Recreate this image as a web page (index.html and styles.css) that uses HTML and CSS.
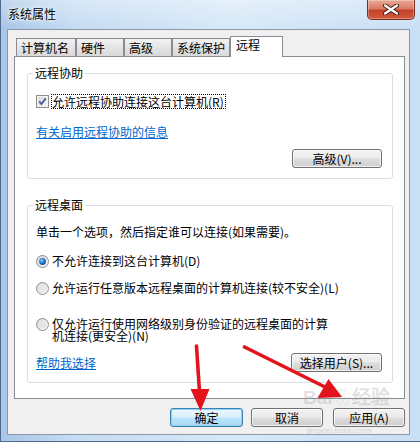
FILE: index.html
```html
<!DOCTYPE html>
<html lang="zh-CN">
<head>
    <meta charset="UTF-8">
    <title>系统属性</title>
    <link rel="stylesheet" href="styles.css">
</head>
<body>
    <div class="window">
        <div class="titlebar">
            <span class="title">系统属性</span>
            <span class="close-btn">
                <svg width="16" height="11" viewBox="0 0 16 11">
                    <path d="M2 1.5 L14 9.5 M14 1.5 L2 9.5" stroke="#4a2018" stroke-width="4.2" stroke-linecap="round"/>
                    <path d="M2 1.5 L14 9.5 M14 1.5 L2 9.5" stroke="#fff" stroke-width="2.2" stroke-linecap="round"/>
                </svg>
            </span>
        </div>

        <div class="client">
            <div class="tabs">
                <span class="tab tab-name">计算机名</span>
                <span class="tab tab-hw">硬件</span>
                <span class="tab tab-adv">高级</span>
                <span class="tab tab-prot">系统保护</span>
                <span class="tab tab-remote active">远程</span>
            </div>

            <div class="panel">
                <fieldset class="group">
                    <legend>远程协助</legend>
                    <div class="group-body">
                        <div class="check-row">
                            <svg class="checkbox" width="13" height="13" viewBox="0 0 13 13">
                                <defs>
                                    <linearGradient id="cb-in" x1="0" y1="0" x2="1" y2="1">
                                        <stop offset="0" stop-color="#d9d9d9"/>
                                        <stop offset="1" stop-color="#f7f7f7"/>
                                    </linearGradient>
                                </defs>
                                <rect x="0.5" y="0.5" width="12" height="12" fill="#f4f4f4" stroke="#8e8f8f"/>
                                <rect x="2" y="2" width="9" height="9" fill="url(#cb-in)"/>
                                <path d="M3.2 6.4 L5.4 9 L9.8 3.4" stroke="#4b5f9c" stroke-width="1.9" fill="none"/>
                            </svg>
                            <span class="focus-label">允许远程协助连接这台计算机(R)</span>
                        </div>
                        <a href="#" class="link link-info">有关启用远程协助的信息</a>
                        <div class="btn-row">
                            <button class="btn btn-adv">高级(V)...</button>
                        </div>
                    </div>
                </fieldset>

                <fieldset class="group group-desktop">
                    <legend>远程桌面</legend>
                    <div class="group-body">
                        <div class="desc">单击一个选项，然后指定谁可以连接(如果需要)。</div>
                        <div class="radio-row row-first">
                            <svg class="radio" width="13" height="13" viewBox="0 0 13 13">
                                <defs>
                                    <radialGradient id="rd-dot" cx="0.4" cy="0.35" r="0.7">
                                        <stop offset="0" stop-color="#8fd0fb"/>
                                        <stop offset="0.5" stop-color="#2a7fd0"/>
                                        <stop offset="1" stop-color="#0b3f86"/>
                                    </radialGradient>
                                    <linearGradient id="rd-in" x1="0" y1="0" x2="1" y2="1">
                                        <stop offset="0" stop-color="#d6d6d6"/>
                                        <stop offset="1" stop-color="#fbfbfb"/>
                                    </linearGradient>
                                </defs>
                                <circle cx="6.5" cy="6.5" r="6" fill="url(#rd-in)" stroke="#8e8f8f"/>
                                <circle cx="6.5" cy="6.5" r="3.4" fill="url(#rd-dot)"/>
                            </svg>
                            <span>不允许连接到这台计算机(D)</span>
                        </div>
                        <div class="radio-row row-second">
                            <svg class="radio" width="13" height="13" viewBox="0 0 13 13">
                                <circle cx="6.5" cy="6.5" r="6" fill="url(#rd-in)" stroke="#8e8f8f"/>
                                <circle cx="6.5" cy="6.5" r="4" fill="#e6e6e6"/>
                            </svg>
                            <span>允许运行任意版本远程桌面的计算机连接(较不安全)(L)</span>
                        </div>
                        <div class="radio-row row-third">
                            <svg class="radio" width="13" height="13" viewBox="0 0 13 13">
                                <circle cx="6.5" cy="6.5" r="6" fill="url(#rd-in)" stroke="#8e8f8f"/>
                                <circle cx="6.5" cy="6.5" r="4" fill="#e6e6e6"/>
                            </svg>
                            <span class="wrap-label">仅允许运行使用网络级别身份验证的远程桌面的计算机连接(更安全)(N)</span>
                        </div>
                        <div class="help-row">
                            <a href="#" class="link">帮助我选择</a>
                            <button class="btn btn-users">选择用户(S)...</button>
                        </div>
                    </div>
                </fieldset>
            </div>

            <div class="dialog-buttons">
                <button class="btn btn-ok">确定</button>
                <button class="btn btn-cancel">取消</button>
                <button class="btn btn-apply">应用(A)</button>
            </div>
        </div>

        <div class="watermark">
            <span class="wm-big">Bai</span><span class="wm-paw">❀</span><span class="wm-big">经验</span>
        </div>
        <div class="wm-small">jingyan.baidu.com</div>

        <svg class="arrows" width="420" height="442" viewBox="0 0 420 442">
            <path d="M195.5 346 L198.5 392" stroke="#e3131b" stroke-width="3.6" stroke-linecap="round"/>
            <path d="M189.5 389 L208.5 389 L199.5 411 Z" fill="#e3131b"/>
            <path d="M243.5 347 L324 387" stroke="#e3131b" stroke-width="3.6" stroke-linecap="round"/>
            <path d="M316.5 398 L327.5 379 L341 397 Z" fill="#e3131b"/>
        </svg>
    </div>
</body>
</html>
```

FILE: styles.css
```css
* {
    box-sizing: border-box;
}
body {
    margin: 0;
    font-family: "Noto Sans CJK SC", "Noto Sans", sans-serif;
    font-size: 12px;
    color: #000;
    background: #7d9c7a;
}
.window {
    position: relative;
    width: 420px;
    height: 442px;
    display: flex;
    flex-direction: column;
    padding: 0 10px 6px 6px;
    border-left: 1px solid #4f6a8c;
    border-bottom: 1px solid #4f6a8c;
    background:
        linear-gradient(to bottom, rgba(255,255,255,0.35), rgba(255,255,255,0) 28px),
        linear-gradient(to right, #a8c6e6 0%, #c5dcf3 18%, #d7e8f8 55%, #c9dff5 100%);
}
.titlebar {
    height: 29px;
    display: flex;
    align-items: flex-start;
}
.title {
    margin: 7px 0 0 1px;
    line-height: 14px;
    text-shadow: 0 0 6px #fff, 0 0 3px #fff;
}
.close-btn {
    margin-left: auto;
    margin-right: -5px;
    width: 48px;
    height: 20px;
    display: flex;
    align-items: center;
    justify-content: center;
    border: 1px solid #7a2f23;
    border-top: none;
    border-radius: 0 0 5px 5px;
    background: linear-gradient(to bottom, #e9a997 0%, #d97a63 45%, #c2412a 55%, #d35a3c 100%);
    box-shadow: inset 0 0 0 1px rgba(255,255,255,0.3);
}
.client {
    flex: 1;
    display: flex;
    flex-direction: column;
    border: 1px solid #8b97a6;
    background: #f0f0f0;
}

/* tabs */
.tabs {
    display: flex;
    align-items: flex-end;
    height: 20px;
    margin: 6px 0 0 8px;
}
.tab {
    height: 18px;
    padding: 2px 0 0 4px;
    line-height: 14px;
    border: 1px solid #898c95;
    border-bottom: none;
    background: linear-gradient(to bottom, #f3f3f3, #e4e4e4 50%, #d9d9d9);
    white-space: nowrap;
}
.tab-name { width: 60px; }
.tab-hw { width: 48px; }
.tab-adv { width: 48px; }
.tab-prot { width: 58px; }
.tab.active {
    position: relative;
    z-index: 1;
    width: 53px;
    height: 21px;
    margin-bottom: -1px;
    padding-top: 1px;
    padding-left: 5px;
    background: #fff;
}

/* panel */
.panel {
    width: 391px;
    margin-left: 6px;
    padding: 9px 11px 15px 12px;
    border: 1px solid #898c95;
    background: #fff;
}
.group {
    margin: 0;
    padding: 0;
    min-width: 0;
    border: 1px solid #d5dfe5;
    border-radius: 3px;
}
.group legend {
    margin-left: 5px;
    padding: 0 2px;
    line-height: 14px;
}
.group-desktop {
    margin-top: 19px;
}
.group-body {
    padding: 0 10px 10px 8px;
}
.check-row {
    display: flex;
    align-items: center;
    gap: 2px;
    margin-top: 14px;
}
.focus-label {
    padding-right: 1px;
    line-height: 13px;
    border: 1px dotted #000;
}
.link {
    display: block;
    width: fit-content;
    line-height: 14px;
    color: #0066cc;
    text-decoration: underline;
}
.link-info {
    margin-top: 16px;
}
.btn-row {
    display: flex;
    justify-content: flex-end;
    margin-top: 10px;
}
.desc {
    margin-top: 13px;
    line-height: 14px;
}
.radio-row {
    display: flex;
    align-items: center;
    gap: 3px;
    line-height: 14px;
}
.row-first { margin-top: 15px; }
.row-second { margin-top: 13px; }
.row-third {
    margin-top: 23px;
    align-items: flex-start;
}
.wrap-label {
    max-width: 282px;
    line-height: 12px;
}
.help-row {
    display: flex;
    justify-content: space-between;
    align-items: center;
    margin-top: 11px;
}

/* buttons */
.btn {
    height: 19px;
    padding: 0;
    font-family: inherit;
    font-size: 12px;
    line-height: 16px;
    color: #000;
    border: 1px solid #707070;
    border-radius: 3px;
    background: linear-gradient(to bottom, #f2f2f2 0%, #ebebeb 48%, #dddddd 52%, #cfcfcf 100%);
    box-shadow: inset 0 0 0 1px rgba(255,255,255,0.7);
}
.btn-adv { width: 90px; }
.btn-users { width: 91px; }
.dialog-buttons {
    display: flex;
    justify-content: flex-end;
    width: 391px;
    margin: 9px 0 0 6px;
}
.btn-ok {
    width: 73px;
    border-color: #3c7fb1;
    background: linear-gradient(to bottom, #eaf6fd 0%, #d9f0fc 48%, #bee6fd 52%, #a7d9f5 100%);
    box-shadow: inset 0 0 0 1px #8fd0f5;
}
.btn-cancel {
    width: 72px;
    margin-left: 8px;
}
.btn-apply {
    width: 72px;
    margin-left: 10px;
}

/* overlays */
.watermark {
    position: absolute;
    left: 302px;
    top: 388px;
    line-height: 20px;
    color: rgba(150,150,150,0.28);
    font-family: "Liberation Sans", sans-serif;
    white-space: nowrap;
}
.wm-big {
    font-size: 19px;
    font-weight: bold;
}
.wm-paw {
    font-size: 17px;
    margin: 0 1px;
}
.wm-small {
    position: absolute;
    left: 306px;
    top: 427px;
    font-family: "Liberation Sans", sans-serif;
    font-size: 8px;
    line-height: 7px;
    color: rgba(150,150,150,0.35);
}
.arrows {
    position: absolute;
    left: 0;
    top: 0;
    pointer-events: none;
}
```
